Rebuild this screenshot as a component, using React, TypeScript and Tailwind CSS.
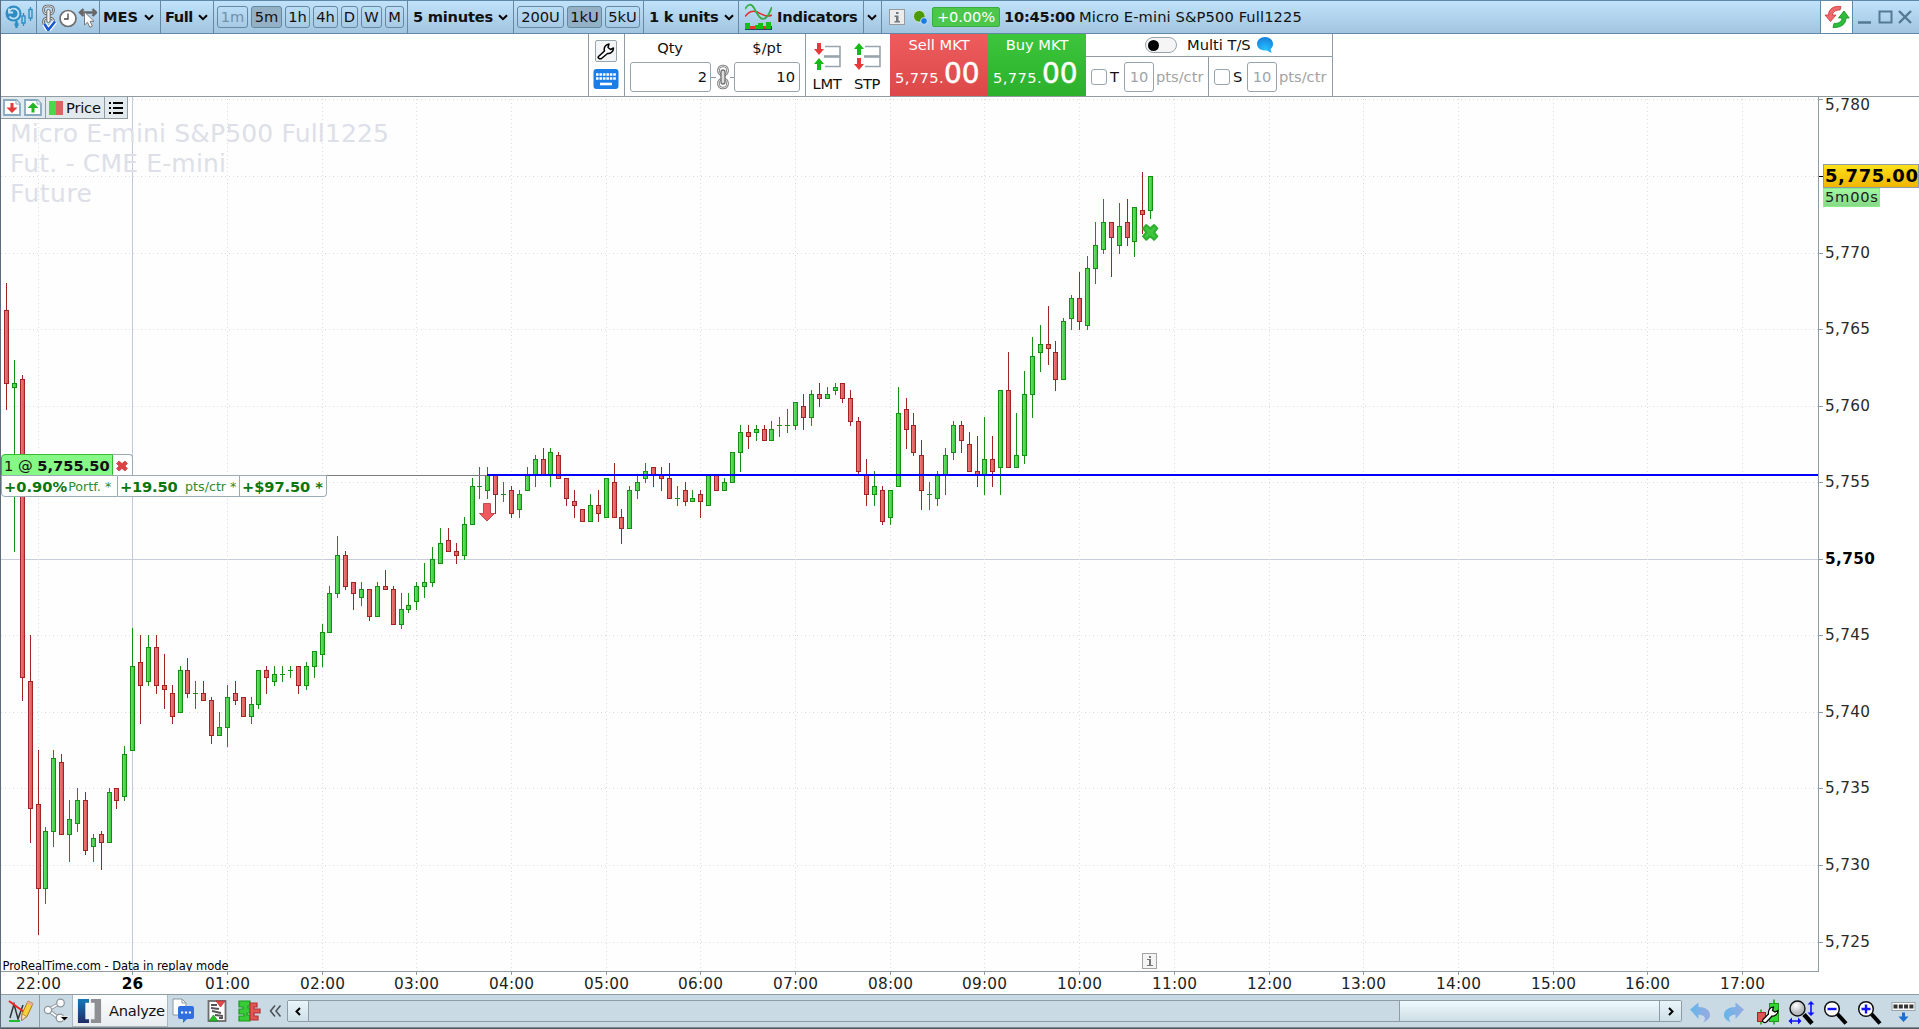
import React from "react";

type Dir = "g" | "r";
type Candle = [Dir, number, number, number, number];

/* direction, high, body top, body bottom, low (chart y units) */
const CANDLES: Candle[] = [
  ["r", 283, 310, 384, 410], ["g", 360, 383, 388, 552], ["r", 375, 379, 678, 701], ["r", 635, 681, 809, 843],
  ["r", 750, 804, 889, 935], ["g", 827, 831, 889, 904], ["g", 750, 758, 832, 847], ["r", 754, 762, 835, 835],
  ["g", 800, 819, 835, 862], ["g", 788, 800, 824, 832], ["r", 792, 800, 851, 855], ["g", 834, 838, 847, 862],
  ["r", 831, 834, 843, 870], ["g", 788, 792, 843, 843], ["r", 788, 788, 801, 809], ["g", 746, 754, 797, 801],
  ["g", 628, 666, 751, 751], ["r", 635, 662, 686, 724], ["g", 635, 647, 682, 686], ["r", 635, 647, 686, 694],
  ["r", 654, 685, 690, 709], ["r", 685, 693, 717, 724], ["g", 666, 670, 713, 713], ["r", 658, 670, 694, 698],
  ["g", 681, 693, 694, 709], ["r", 681, 693, 701, 701], ["r", 697, 700, 736, 744], ["g", 712, 727, 736, 736],
  ["g", 685, 697, 728, 747], ["r", 681, 693, 701, 705], ["r", 697, 697, 717, 717], ["g", 697, 704, 717, 724],
  ["g", 670, 670, 705, 709], ["r", 666, 670, 678, 694], ["g", 666, 674, 682, 686], ["g", 666, 674, 675, 682],
  ["g", 666, 670, 671, 678], ["r", 666, 666, 686, 694], ["g", 662, 666, 686, 690], ["g", 651, 651, 667, 678],
  ["g", 624, 632, 655, 667], ["g", 586, 593, 633, 633], ["g", 536, 555, 594, 598], ["r", 551, 555, 587, 590],
  ["r", 582, 582, 594, 610], ["g", 582, 589, 598, 606], ["r", 589, 589, 617, 621], ["g", 582, 586, 617, 617],
  ["r", 570, 586, 590, 590], ["r", 586, 589, 625, 625], ["g", 593, 609, 625, 629], ["g", 593, 605, 610, 613],
  ["g", 582, 586, 602, 610], ["g", 563, 582, 587, 598], ["g", 547, 559, 583, 587], ["g", 528, 543, 564, 564],
  ["r", 528, 540, 552, 552], ["r", 543, 551, 556, 564], ["g", 517, 524, 556, 560], ["g", 478, 486, 525, 525],
  ["g", 467, 486, 487, 499], ["g", 467, 475, 491, 499], ["r", 475, 475, 495, 514], ["g", 482, 494, 495, 502],
  ["r", 486, 490, 514, 518], ["g", 490, 494, 510, 518], ["g", 467, 475, 491, 491], ["g", 455, 459, 475, 487],
  ["r", 448, 459, 475, 475], ["g", 448, 452, 475, 487], ["r", 452, 455, 479, 479], ["r", 478, 478, 499, 506],
  ["r", 490, 501, 506, 518], ["r", 509, 509, 522, 522], ["g", 494, 505, 522, 522], ["r", 490, 505, 514, 522],
  ["g", 478, 478, 518, 518], ["r", 463, 482, 518, 518], ["r", 509, 517, 529, 544], ["g", 486, 490, 529, 529],
  ["g", 475, 482, 491, 499], ["g", 463, 471, 479, 483], ["r", 467, 467, 475, 487], ["r", 467, 474, 479, 491],
  ["r", 463, 478, 499, 499], ["g", 486, 498, 499, 506], ["r", 482, 490, 502, 506], ["g", 490, 498, 502, 502],
  ["r", 490, 494, 502, 518], ["g", 475, 475, 506, 506], ["r", 475, 475, 491, 491], ["g", 478, 482, 491, 491],
  ["g", 452, 452, 483, 483], ["g", 425, 432, 453, 472], ["r", 425, 432, 437, 449], ["g", 425, 429, 433, 441],
  ["r", 425, 429, 441, 441], ["g", 421, 429, 441, 441], ["g", 417, 425, 426, 437], ["g", 409, 425, 426, 433],
  ["g", 402, 402, 426, 430], ["r", 394, 406, 418, 430], ["g", 390, 394, 418, 426], ["r", 383, 394, 399, 407],
  ["g", 387, 394, 399, 399], ["g", 383, 387, 391, 395], ["r", 383, 383, 399, 403], ["r", 390, 398, 422, 426],
  ["r", 417, 421, 472, 475], ["r", 459, 475, 495, 506], ["g", 471, 486, 495, 506], ["r", 486, 490, 522, 525],
  ["g", 490, 490, 518, 525], ["g", 387, 413, 487, 487], ["r", 398, 409, 430, 449], ["r", 413, 425, 453, 456],
  ["r", 440, 455, 491, 510], ["g", 482, 494, 495, 510], ["g", 471, 475, 499, 506], ["g", 448, 455, 475, 495],
  ["g", 421, 425, 453, 460], ["r", 421, 425, 441, 453], ["r", 432, 444, 472, 472], ["r", 436, 471, 475, 487],
  ["g", 417, 459, 475, 495], ["r", 436, 459, 472, 487], ["g", 390, 390, 468, 495], ["r", 352, 390, 468, 468],
  ["g", 413, 455, 468, 468], ["g", 371, 394, 456, 464], ["g", 337, 356, 395, 418], ["g", 325, 344, 353, 372],
  ["r", 306, 344, 349, 365], ["r", 341, 352, 380, 391], ["g", 318, 321, 380, 380], ["g", 295, 298, 319, 330],
  ["r", 272, 298, 322, 330], ["g", 256, 268, 326, 330], ["g", 222, 245, 269, 284], ["g", 199, 222, 250, 254],
  ["r", 222, 222, 238, 277], ["g", 203, 226, 246, 254], ["r", 199, 222, 238, 246], ["g", 207, 207, 242, 257],
  ["r", 172, 210, 215, 234], ["g", 176, 176, 211, 219],
];

const barX = (i: number) => 6 + 8 * i - Math.floor((i + 5.1) / 9.2);

const TIMES = [
  "22:00", "26", "01:00", "02:00", "03:00", "04:00", "05:00", "06:00", "07:00", "08:00",
  "09:00", "10:00", "11:00", "12:00", "13:00", "14:00", "15:00", "16:00", "17:00",
].map((label, k) => ({ label, x: barX(4 + 12 * k), bold: label === "26" }));

const PRICES = [
  { label: "5,780", y: 99 }, { label: "", y: 176 }, { label: "5,770", y: 253 }, { label: "5,765", y: 329 },
  { label: "5,760", y: 406 }, { label: "5,755", y: 482 }, { label: "5,750", y: 559 }, { label: "5,745", y: 635 },
  { label: "5,740", y: 712 }, { label: "5,735", y: 788 }, { label: "5,730", y: 865 }, { label: "5,725", y: 942 },
];

function Chart() {
  return (
    <svg className="block" width="1918" height="897" viewBox="1 97 1918 897" shapeRendering="crispEdges">
      <defs>
        <linearGradient id="up" x1="0" x2="1"><stop offset="0" stopColor="#63e563" /><stop offset="1" stopColor="#41c441" /></linearGradient>
        <linearGradient id="down" x1="0" x2="1"><stop offset="0" stopColor="#f07878" /><stop offset="1" stopColor="#d65a5a" /></linearGradient>
        <linearGradient id="gold" x1="0" x2="0" y1="0" y2="1"><stop offset="0" stopColor="#ffe21c" /><stop offset="1" stopColor="#f0b400" /></linearGradient>
        <linearGradient id="mint" x1="0" x2="0" y1="0" y2="1"><stop offset="0" stopColor="#a2faa2" /><stop offset="1" stopColor="#86d886" /></linearGradient>
      </defs>
      <rect x="1" y="97" width="1918" height="897" fill="#fff" />
      <rect x="1" y="97" width="1817" height="874" fill="#fefefe" />
      {PRICES.map((p) =>
        p.y === 559 ? (
          <rect key={p.y} x="1" y="559" width="1817" height="1" fill="#c9ccdb" />
        ) : (
          <line key={p.y} x1="1" x2="1818" y1={p.y + 0.5} y2={p.y + 0.5} stroke="#dcdce6" strokeDasharray="1 3" />
        ),
      )}
      {TIMES.map((t) =>
        t.bold ? (
          <rect key={t.x} x={t.x} y="97" width="1" height="874" fill="#c3c8dc" />
        ) : (
          <line key={t.x} x1={t.x + 0.5} x2={t.x + 0.5} y1="99" y2="971" stroke="#dcdce6" strokeDasharray="1 3" />
        ),
      )}
      <g fill="#dde0e8" fontSize="25" shapeRendering="auto">
        <text x="10" y="142" textLength="379">Micro E-mini S&amp;P500 Full1225</text>
        <text x="10" y="172" textLength="216">Fut. - CME E-mini</text>
        <text x="10" y="202" textLength="82">Future</text>
      </g>
      {CANDLES.map(([d, hi, top, bot, lo], i) => {
        const x = barX(i);
        const edge = d === "g" ? "#159015" : "#a02424";
        return (
          <g key={i}>
            <rect x={x} y={hi} width="1" height={lo - hi} fill={edge} />
            <rect x={x - 2} y={top} width="5" height={bot - top} fill={edge} />
            {bot - top > 2 && (
              <rect x={x - 1} y={top + 1} width="3" height={bot - top - 2} fill={d === "g" ? "url(#up)" : "url(#down)"} />
            )}
          </g>
        );
      })}
      <rect x="133" y="475" width="354" height="1" fill="#7d7d7d" />
      <rect x="487" y="474" width="1331" height="2" fill="#0000fa" />
      <path d="M483.500 503.500h7v10h4l-7.500 7.500-7.500-7.500h4z" fill="#f05a5e" stroke="#c04a50" strokeWidth="1" shapeRendering="auto" />
      <path d="M1146.300 225l3.900 3.500 3.900-3.500 3.200 3.400-3.200 4 3.200 4-3.200 3.300-3.900-3.400-3.900 3.400-3.200-3.300 3.200-4-3.200-4z" fill="#3ec63e" stroke="#2fae2f" strokeWidth="2" strokeLinejoin="round" shapeRendering="auto" />
      <rect x="1142.500" y="953.500" width="14" height="15" fill="#f4f4f4" stroke="#a3a3a3" />
      <path d="M1149 956h2v2h-2zM1147 959h4v6h2v1h-6v-1h2v-5h-2z" fill="#777" />
      <text x="2.500" y="969.500" fontSize="11.500" fill="#000" textLength="226">ProRealTime.com - Data in replay mode</text>
      <rect x="1" y="971" width="1818" height="1" fill="#8f9ca4" />
      <rect x="1" y="972" width="1818" height="22" fill="#fff" />
      <rect x="1818" y="97" width="1" height="875" fill="#8f9ca4" />
      {TIMES.map((t) => (
        <g key={t.x}>
          <rect x={t.x} y="972" width="1" height="3" fill="#8f9ca4" />
          <text x={t.x + 0.5} y="989" fontSize="15.300" textAnchor="middle" fontWeight={t.bold ? 700 : 400} fill={t.bold ? "#000" : "#1e1e1e"} textLength={t.bold ? 21.5 : 45}>{t.label}</text>
        </g>
      ))}
      {PRICES.map((p) => (
        <g key={p.y}>
          <rect x="1819" y={p.y} width="4" height="1" fill={p.label ? "#8f9ca4" : "#000"} />
          {p.label && (
            <text x="1825" y={p.y === 99 ? 110 : p.y + 5} fontSize="15.300" fontWeight={p.y === 559 ? 700 : 400} fill={p.y === 559 ? "#000" : "#2a2a2a"} textLength={p.y === 559 ? 50 : 45}>{p.label}</text>
          )}
        </g>
      ))}
      <rect x="1823.500" y="164.500" width="95" height="23" fill="url(#gold)" stroke="#8f9ca4" />
      <text x="1825" y="182" fontSize="18" fontWeight="700" fill="#000" textLength="93">5,775.00</text>
      <rect x="1823.500" y="188" width="56" height="18.500" fill="url(#mint)" stroke="#86ee86" />
      <text x="1825" y="202" fontSize="14.670" fill="#222" textLength="53">5m00s</text>
    </svg>
  );
}

const Chevron = ({ className = "" }: { className?: string }) => (
  <svg className={className} width="10" height="7" viewBox="0 0 10 7" fill="none" stroke="#000" strokeWidth="2"><path d="M1 1.300l4 3.900 4-3.900" /></svg>
);

const Chip = ({ label, cls }: { label: string; cls: string }) => (
  <div className={"flex h-[22px] shrink-0 items-center justify-center rounded-[3px] border border-[#6489a1] text-[14.670px] " + cls}>{label}</div>
);

const ChainIcon = () => (
  <svg width="14" height="26" viewBox="0 0 14 26" fill="none" strokeWidth="2.600">
    <g stroke="#777"><rect x="2.500" y="2" width="9" height="9" rx="4" /><rect x="2.500" y="15" width="9" height="9" rx="4" /></g>
    <g stroke="#e0e0e0" strokeWidth="1"><rect x="2.500" y="2" width="9" height="9" rx="4" /><rect x="2.500" y="15" width="9" height="9" rx="4" /></g>
    <rect x="5" y="6" width="4" height="14" rx="2" fill="#ddd" stroke="#707070" strokeWidth="1.300" />
  </svg>
);

function TitleBar() {
  const sep = "flex h-full shrink-0 items-center border-r border-[#6489a1] ";
  return (
    <div className="flex h-[34px] shrink-0 border-y border-[#5f89a8] bg-gradient-to-b from-[#c0e2fb] to-[#a2c5df]">
      <div className={sep + "w-9 pl-1"}>
        <svg width="30" height="26" viewBox="0 0 30 26" fill="none">
          <circle cx="8.500" cy="9.500" r="8" fill="#2f8dc4" />
          <path d="M4 7.500a5 5 0 1 1 0.500 5M4 4.500v4h4" stroke="#c4e2f6" strokeWidth="1.800" />
          <path d="M11.500 17v7M9.500 20.500h4" stroke="#2f8dc4" strokeWidth="2.400" />
          <path d="M18.500 9v3m0 7v3M25.500 3v3m0 8v3" stroke="#2f8dc4" strokeWidth="1.300" />
          <rect x="17" y="12" width="3" height="7" stroke="#2f8dc4" strokeWidth="1.400" />
          <rect x="24" y="5.500" width="3" height="8.500" stroke="#2f8dc4" strokeWidth="1.400" />
        </svg>
      </div>
      <div className={sep + "w-[63px] pl-1"}>
        <svg width="56" height="28" viewBox="0 0 56 28" fill="none">
          <rect x="2.500" y="3" width="10" height="8" rx="3.500" stroke="#666" strokeWidth="2.600" />
          <rect x="2.500" y="3" width="10" height="8" rx="3.500" stroke="#e2e2e2" strokeWidth="1" />
          <rect x="2.500" y="15" width="10" height="8" rx="3.500" stroke="#666" strokeWidth="2.600" />
          <rect x="2.500" y="15" width="10" height="8" rx="3.500" stroke="#e2e2e2" strokeWidth="1" />
          <rect x="5.800" y="6.500" width="3.400" height="13" rx="1.700" fill="#eee" stroke="#666" />
          <path d="M3.500 21l3.800 6L14 18.500" stroke="#fff" strokeWidth="5" />
          <path d="M3.500 21l3.800 6L14 18.500" stroke="#1557d4" strokeWidth="2.600" />
          <circle cx="27" cy="15.500" r="8" fill="#fff" stroke="#6d6d6d" strokeWidth="1.700" />
          <path d="M27 10.500v5.500h-4" stroke="#444" strokeWidth="1.300" />
          <path d="M40 9.500h14M42.500 6l-3.500 3.500 3.500 3.500M51.500 6l3.500 3.500-3.500 3.500" stroke="#666" strokeWidth="2.400" />
          <path d="M43.500 9v13l3-2.700 2.400 5 2.500-1.200-2.400-4.800h4z" fill="#fff" stroke="#777" strokeWidth="1" />
        </svg>
      </div>
      <div className={sep + "w-[61px] gap-[6px] pl-[3px] text-[14.670px] font-bold"}>MES<Chevron /></div>
      <div className={sep + "w-[53px] gap-[5px] pl-1 text-[14.670px] font-bold tracking-[-0.5px]"}>Full<Chevron /></div>
      <div className={sep + "w-[194px] gap-[3px] pl-[3px]"}>
        <Chip label="1m" cls="w-[31px] text-[#6f91aa]" />
        <Chip label="5m" cls="w-[31px] bg-[#94b0c4]" />
        <Chip label="1h" cls="w-[25px]" />
        <Chip label="4h" cls="w-[25px]" />
        <Chip label="D" cls="w-[17px]" />
        <Chip label="W" cls="w-[21px]" />
        <Chip label="M" cls="w-[19px]" />
      </div>
      <div className={sep + "w-[106px] gap-[5px] pl-[5px] text-[14.670px] font-bold tracking-[-0.25px] whitespace-nowrap"}>5 minutes<Chevron /></div>
      <div className={sep + "w-[130px] gap-[3px] pl-[3px]"}>
        <Chip label="200U" cls="w-[47px]" />
        <Chip label="1kU" cls="w-[35px] bg-[#94b0c4]" />
        <Chip label="5kU" cls="w-[35px]" />
      </div>
      <div className={sep + "w-[95px] gap-[5px] pl-[5px] text-[14.670px] font-bold tracking-[-0.25px] whitespace-nowrap"}>1 k units<Chevron /></div>
      <div className={sep + "w-[125px] gap-1.5 pl-1.5 text-[14.670px] font-bold tracking-[-0.25px]"}>
        <svg className="shrink-0" width="27" height="28" viewBox="0 0 27 28" fill="none">
          <path d="M0 13.500C4 9 7 7 12 9s9 6 15 3" stroke="#d33" strokeWidth="1.600" />
          <path d="M0 6C3 1 6 0 9 5s5 11 9 11 6-5 9-12" stroke="#2fae3c" strokeWidth="1.700" />
          <path d="M0 23h27v4H0z" fill="#246" />
          <path d="M0 20h5v6H0zM10 22h4v4h-4zM13 20h5v6h-5zM21 19h5v7h-5z" fill="#12c012" />
          <path d="M5 23h5v3H5zM18 23h3v3h-3z" fill="#e33" />
        </svg>
        <span className="-ml-px">Indicators</span>
      </div>
      <div className={sep + "w-[18px] justify-center pr-px"}><Chevron /></div>
      <div className="flex min-w-0 flex-1 items-center pl-[7px]">
        <svg width="17" height="17" viewBox="0 0 17 17"><rect x=".5" y=".5" width="15" height="15" fill="#ececec" stroke="#999" /><path d="M7 3h2.500v2H7zM5.500 6.500h4V12H11v1.500H5.500V12H7V8H5.500z" fill="#6e7880" /></svg>
        <svg className="ml-[7px]" width="15" height="15" viewBox="0 0 15 15"><circle cx="6.300" cy="6.300" r="5.800" fill="#4a9a05" stroke="#dff0d0" strokeWidth=".8" /><circle cx="11" cy="11" r="3.400" fill="#1a7be8" stroke="#e4f0fa" strokeWidth=".8" /></svg>
        <div className="ml-[4px] flex h-5 w-[68px] items-center justify-center rounded-[2px] border border-[#3aae3a] bg-[#4cc74c] text-[14.670px] tracking-[-0.1px] text-white">+0.00%</div>
        <div className="ml-[4px] w-[75px] text-[14.670px] font-bold tracking-[-0.25px]">10:45:00</div>
        <div className="text-[14.670px] tracking-[0.12px]">Micro E-mini S&amp;P500 Full1225</div>
      </div>
      <div className="flex w-[33px] shrink-0 items-center justify-center border-x border-[#5f89a8] bg-white">
        <svg width="26" height="24" viewBox="0 0 26 24">
          <path d="M17 1.500C10 .5 4.500 4 4.500 10H1L6.500 16.500 12 10H8.500c0-3 3-5 7.500-5z" fill="#f26a6e" stroke="#c33" strokeWidth=".8" />
          <path d="M9 22.500c8 .500 13-3.500 13-9.500h3.200L20 6 14.500 13H18c0 3.500-3 5.500-8 5.500z" fill="#2ebc3a" stroke="#0d8d1c" strokeWidth=".8" />
        </svg>
      </div>
      <svg className="w-[66px] shrink-0" height="32" viewBox="0 0 66 32" fill="none" stroke="#547a93" strokeWidth="2">
        <path d="M5 21.500h13M46 10l12 12M58 10l-12 12" strokeWidth="2.400" />
        <rect x="26.500" y="10.500" width="12" height="11" />
      </svg>
    </div>
  );
}

const Arrow = ({ up, color }: { up?: boolean; color: string }) => (
  <svg className={up ? "rotate-180" : ""} width="10" height="12" viewBox="0 0 10 12"><path d="M3 0h4v6h3l-5 6-5-6h3z" fill={color} /></svg>
);

function OrderType({ label, upFirst }: { label: string; upFirst?: boolean }) {
  return (
    <div className="flex w-10 flex-col items-center pt-[9px]">
      <div className="flex">
        <div className="flex flex-col gap-[3px]">
          <Arrow up={upFirst} color={upFirst ? "#18b818" : "#e53a3a"} />
          <Arrow up={!upFirst} color={upFirst ? "#e53a3a" : "#18b818"} />
        </div>
        <svg width="17" height="27" viewBox="0 0 17 27" fill="none" stroke="#96a5ad" strokeWidth="1.600"><path d="M1 3.500h15v20H1" /><path d="M0 13.500h16" strokeWidth="2.600" /></svg>
      </div>
      <div className="mt-[5px] text-[14.670px] leading-[18px] tracking-[-0.3px]">{label}</div>
    </div>
  );
}

function MarketButton({ label, cls }: { label: string; cls: string }) {
  return (
    <div className={"flex h-[62px] w-[98px] flex-col text-white " + cls}>
      <div className="pt-[2px] text-center text-[14.670px] leading-[18px]">{label}</div>
      <div className="flex items-baseline pl-[5px] pt-px leading-[38px]">
        <span className="w-[49px] text-[14.670px] tracking-[0.4px]">5,775.</span>
        <span className="text-[28px] [-webkit-text-stroke:0.5px_white]">00</span>
      </div>
    </div>
  );
}

function StopField({ label }: { label: string }) {
  return (
    <div className="flex flex-1 items-center pl-[5px] text-[14.670px]">
      <div className="h-4 w-4 rounded-[3px] border border-[#96a5ad] bg-white" />
      <div className="w-[17px] pl-[3px]">{label}</div>
      <div className="flex h-[30px] w-[30px] items-center justify-center rounded-[3px] border border-[#96a5ad] text-[#a0a4ae]">10</div>
      <div className="pl-[2px] text-[#a3a3a3]">pts/ctr</div>
    </div>
  );
}

function OrderPanel() {
  const b = "border-[#8f9ca4]";
  return (
    <div className={"flex h-[63px] shrink-0 border-b bg-white pl-[587px] " + b}>
      <div className={"flex w-[37px] flex-col items-center gap-[7px] border-x pr-px pt-[6px] " + b}>
        <div className="flex h-[22px] w-[22px] items-center justify-center rounded-[2px] border border-[#96a5ad] bg-[#f4f5f6]">
          <svg width="18" height="18" viewBox="0 0 18 18" fill="#fff" stroke="#000" strokeWidth="1.500" strokeLinejoin="round"><path d="M1.500 14.500l6-5.500C6.500 5.500 8.500 2.500 12 2L11 5.500l2.500 2 3-1.500c0 3.500-3 6-6 5.500l-6 5c-2 1-4-.500-3-2z" /></svg>
        </div>
        <svg width="26" height="20" viewBox="0 0 26 20"><rect x=".5" y="0" width="25" height="20" rx="3" fill="#1b7de8" /><path d="M3 5.500h20M3 9.500h20" stroke="#fff" strokeWidth="2.600" strokeDasharray="2.600 .850" /><path d="M7 15h12" stroke="#fff" strokeWidth="2.600" /></svg>
      </div>
      <div className={"flex w-[181px] items-start border-r pl-[5px] " + b}>
        <div className="w-[81px] pt-[5px] text-[14.670px] leading-[18px]">
          <div className="pr-px text-center tracking-[-0.2px]">Qty</div>
          <div className="mt-[5px] flex h-[30px] items-center justify-end rounded-[3px] border border-[#96a5ad] pr-[3px]">2</div>
        </div>
        <div className="mt-[29px] flex h-[28px] w-[23px] items-center">
          <span className="h-px flex-1 bg-[#8f9ca4]" /><ChainIcon /><span className="h-px flex-1 bg-[#8f9ca4]" />
        </div>
        <div className="w-[66px] pt-[5px] text-[14.670px] leading-[18px]">
          <div className="text-center">$/pt</div>
          <div className="mt-[5px] flex h-[30px] items-center justify-end rounded-[3px] border border-[#96a5ad] pr-[4px]">10</div>
        </div>
      </div>
      <div className="flex w-[84px] pl-px"><OrderType label="LMT" /><OrderType label="STP" upFirst /></div>
      <MarketButton label="Sell MKT" cls="bg-gradient-to-b from-[#ee5c5e] to-[#dc4848]" />
      <MarketButton label="Buy MKT" cls="bg-gradient-to-b from-[#3cc63c] to-[#2bb02b]" />
      <div className={"flex w-[247px] flex-col border-r " + b}>
        <div className={"flex h-[23px] items-center border-b pl-[59px] text-[14.670px] " + b}>
          <div className="flex h-4 w-8 items-center rounded-full border border-[#96a5ad] bg-[#f5f5f5] pl-[2px]"><div className="h-[11px] w-[11px] rounded-full bg-black" /></div>
          <div className="pl-[10px]">Multi T/S</div>
          <svg className="ml-[6px]" width="17" height="16" viewBox="0 0 17 16"><defs><radialGradient id="bub" cx=".5" cy=".8" r=".9"><stop offset="0" stopColor="#27c4ff" /><stop offset="1" stopColor="#1478d8" /></radialGradient></defs><path d="M8 0c4.500 0 8 3 8 7 0 2.500-1 4-2.500 5l1 4-4.500-2.500C4 14 0 11 0 7s3.500-7 8-7z" fill="url(#bub)" /></svg>
        </div>
        <div className="flex flex-1">
          <div className={"flex w-[123px] border-r " + b}><StopField label="T" /></div>
          <div className="flex flex-1"><StopField label="S" /></div>
        </div>
      </div>
    </div>
  );
}

const FileArrow = ({ up }: { up?: boolean }) => (
  <svg width="18" height="17" viewBox="0 0 18 17"><path d="M1 1h12.500L17 4.500V16H1z" fill="#fff" stroke="#88a9bf" strokeWidth="1.800" /><path d="M13 1v4h4" fill="#fff" stroke="#88a9bf" />{up ? <path d="M9 3.500L3.500 9h4v4.500h3V9h4z" fill="#23b523" /> : <path d="M7.500 4h3v4.500h4L9 14 3.500 8.500h4z" fill="#e33a3a" />}</svg>
);

function ChartArea() {
  const box = "flex items-center border-[#9babb6] bg-white ";
  return (
    <div className="relative h-[897px] shrink-0">
      <Chart />
      <div className="absolute left-0 top-0 flex h-[22px] w-[127px] border-b border-r border-[#8f9ca4] bg-[#e2eaee]">
        <div className="flex w-[45px] items-center gap-[3px] border-r border-[#8f9ca4] pl-[2px]"><FileArrow /><FileArrow up /></div>
        <div className="flex w-[59px] items-center border-r border-[#8f9ca4] pl-[3px] text-[14.670px] tracking-[-0.2px]">
          <span className="h-[14px] w-[7px] bg-[#4fd44f]" /><span className="mr-[3px] h-[14px] w-[7px] bg-[#dd6262]" />Price
        </div>
        <div className="flex flex-1 items-center justify-center"><svg width="14" height="12" viewBox="0 0 14 12" stroke="#000" strokeWidth="2"><path d="M0 1h2M4 1h10M0 6h2M4 6h10M0 11h2M4 11h10" /></svg></div>
      </div>
      <div className="absolute left-0 top-[357px] flex h-[22px] w-[132px]">
        <div className="flex w-[112px] items-center rounded-tl-[4px] border border-[#36b936] bg-[#86f886] pl-[2px] pt-[2px] text-[14.670px] whitespace-nowrap">1&nbsp;@&nbsp;<b>5,755.50</b></div>
        <div className={box + "flex-1 justify-center rounded-tr-[4px] border-r border-t pr-px"}><svg width="12" height="12" viewBox="0 0 12 12"><path d="M3 1l3 2.500L9 1l2.500 2.500L9 6l2.500 2.500L9 11 6 8.500 3 11 .5 8.500 3 6 .5 3.500z" fill="#dc4444" stroke="#b93030" strokeWidth=".6" /></svg></div>
      </div>
      <div className="absolute left-0 top-[378px] flex h-[22px] w-[326px] whitespace-nowrap text-[14.670px] text-[#0b760b]">
        <div className={box + "w-[117px] rounded-bl-[4px] border pl-[2px] pt-[2px]"}><b>+0.90%</b><span className="ml-px text-[12.700px] text-[#2f8a2f]">Portf. *</span></div>
        <div className={box + "w-[122px] border-y border-r pl-[2px] pt-[2px]"}><b className="w-[65px] tracking-[-0.2px]">+19.50</b><span className="text-[12.700px] text-[#2f8a2f]">pts/ctr *</span></div>
        <div className={box + "flex-1 rounded-br-[4px] border-y border-r pl-[2px] pt-[2px]"}><b className="tracking-[-0.1px]">+$97.50 *</b></div>
      </div>
    </div>
  );
}

function BottomBar() {
  const ends = "flex h-full w-[21px] items-center justify-center bg-gradient-to-b from-[#e9f6fa] to-[#cfe0e8]";
  return (
    <div className="flex h-[33px] shrink-0 border-t border-[#8f9ca4] bg-[#c9dae5]">
      <div className="flex w-[39px] items-center justify-center border-r border-[#8f9ca4]">
        <svg width="27" height="26" viewBox="0 0 27 26" fill="none">
          <path d="M3 20L7 6l4 15 5-14" stroke="#333" strokeWidth="1.500" /><path d="M2 3l15 11" stroke="#e22" strokeWidth="2" /><path d="M2 23h11" stroke="#2b3" strokeWidth="2" />
          <path d="M15 16L21 3l5 2.500-6 13-5.500 4z" fill="#f6cf3c" stroke="#a8761c" /><path d="M21 3l5 2.500-1 2.200-5-2.400z" fill="#e7a9a0" /><path d="M15 16l4.500 2.500-5 4z" fill="#f7e8c8" stroke="#a8761c" strokeWidth=".7" />
        </svg>
      </div>
      <div className="flex w-8 items-center justify-center">
        <svg width="27" height="26" viewBox="0 0 27 26" fill="none"><path d="M5 12L17 5M5 12l12 9" stroke="#8d969c" strokeWidth="3.600" /><path d="M5 12L17 5M5 12l12 9" stroke="#fff" strokeWidth="1.800" /><g fill="#fff" stroke="#8d969c" strokeWidth="1.300"><circle cx="5" cy="12" r="3.600" /><circle cx="17.500" cy="5" r="3.800" /><circle cx="17" cy="20" r="3.800" /></g><path d="M17 18.500h9L21.500 23z" fill="#000" stroke="#fff" strokeWidth=".8" /></svg>
      </div>
      <div className="flex w-[96px] items-center border-x border-b border-[#a9b8c1] bg-gradient-to-b from-[#fdfefe] to-[#e9edf0] pl-[4px] text-[14.670px]">
        <svg className="shrink-0" width="25" height="26" viewBox="0 0 27 27" preserveAspectRatio="none"><defs><linearGradient id="brk" x1="0" x2="0" y1="0" y2="1"><stop offset="0" stopColor="#157ab8" /><stop offset="1" stopColor="#202a68" /></linearGradient></defs><path d="M1 1h12v4H9v17h4v4H1z" fill="url(#brk)" /><path d="M26 1H15v4h4v17h-4v4h11z" fill="#8d8f92" /></svg>
        <span className="pl-[7px] tracking-[-0.3px]">Analyze</span>
      </div>
      <div className="flex w-[119px] items-center pl-[4px]">
        <svg width="23" height="26" viewBox="0 0 23 26"><path d="M1 1h9l4 4v12H1z" fill="#fff" stroke="#8b979e" /><path d="M10 1v4h4" fill="none" stroke="#8b979e" /><path d="M8 8h12a2 2 0 0 1 2 2v9a2 2 0 0 1-2 2h-5l-4 4v-4H8a2 2 0 0 1-2-2v-9a2 2 0 0 1 2-2z" fill="#2f6fe0" /><path d="M9 14.500h2.200M12.900 14.500h2.200M16.800 14.500H19" stroke="#fff" strokeWidth="2.200" /></svg>
        <svg className="ml-[12px]" width="20" height="22" viewBox="0 0 20 22"><rect x="1.500" y="1" width="17" height="20" fill="#fff" stroke="#6c6c6c" strokeWidth="1.800" /><path d="M4 5h6M4 8l8 1M5 11l9 2M8 15l8 1M12 18h4" stroke="#555" strokeWidth="1.800" /><path d="M9 1h9l-4.500 6z" fill="#e14b4b" stroke="#b22" strokeWidth=".7" /><path d="M2 21h9l-4.500-6z" fill="#28c128" stroke="#181" strokeWidth=".7" /></svg>
        <svg className="ml-[11px]" width="23" height="23" viewBox="0 0 23 23"><path d="M1 1h11v5h-2v2h2v5H9v2h3v6H1v-5h5v-2H1V9h4V7H1z" fill="#37cc37" stroke="#1a9a1a" strokeWidth="1.200" /><path d="M12 3h7v4h-3v2h6v4h-6v3h4v4h-8z" fill="#e05656" stroke="#b53333" strokeWidth="1.200" /></svg>
        <svg className="ml-[8px]" width="13" height="12" viewBox="0 0 13 12" fill="none" stroke="#4a4f53" strokeWidth="1.500"><path d="M6 .5L1.500 6 6 11.500M11.500 .5L7 6l4.500 5.500" /></svg>
      </div>
      <div className="mt-[5px] flex h-[22px] w-[1395px] rounded-[2px] border border-[#8f9ca4]">
        <div className={ends + " border-r border-[#8f9ca4]"}><svg width="6" height="9" viewBox="0 0 6 9" fill="none" stroke="#000" strokeWidth="2"><path d="M5 1L1.500 4.500 5 8" /></svg></div>
        <div className="w-[1090px]" />
        <div className="flex-1 border-x border-[#8f9ca4] bg-gradient-to-b from-[#eefafd] to-[#cddfe6]" />
        <div className={ends}><svg width="6" height="9" viewBox="0 0 6 9" fill="none" stroke="#000" strokeWidth="2"><path d="M1 1l3.500 3.500L1 8" /></svg></div>
      </div>
      <svg className="shrink-0" width="237" height="32" viewBox="1682 995.5 237 32" fill="none">
        <defs>
          <linearGradient id="undo" x1="0" x2="1"><stop offset="0" stopColor="#62b6ea" /><stop offset="1" stopColor="#9aaae0" /></linearGradient>
          <radialGradient id="lens" cx=".4" cy=".3"><stop offset="0" stopColor="#fff" /><stop offset="1" stopColor="#b9bcbe" /></radialGradient>
        </defs>
        <path d="M1690 1010l8.500-7v4.500c7 0 11.500 3 11.500 8 0 3-2 5.500-7 7.500 3-3 3-7.500-4.500-8v4.500z" fill="url(#undo)" />
        <path d="M1744 1010l-8.500-7v4.500c-7 0-11.500 3-11.500 8 0 3 2 5.500 7 7.500-3-3-3-7.500 4.500-8v4.500z" fill="url(#undo)" />
        <path d="M1774 1000v25M1761 1010v15" stroke="#1b9a1b" strokeWidth="1.500" />
        <rect x="1769.500" y="1004" width="9" height="18" fill="#35d535" stroke="#1b9a1b" />
        <rect x="1757.500" y="1013" width="8" height="9" fill="#d55" stroke="#a22" />
        <path d="M1763 1020l5.500-5.500c-.500-3.500 1.500-7 5-7l-1 3.500 2.500 1.500 3-1.500c0 3.500-3 6-6 5.500l-5.500 6c-2.500 1.500-5-.500-3.500-2.500z" fill="#fff" stroke="#000" strokeWidth="1.200" />
        <path d="M1804 1015l8 9" stroke="#000" strokeWidth="4.500" /><circle cx="1797.500" cy="1009" r="7.500" fill="url(#lens)" stroke="#111" strokeWidth="1.400" />
        <path d="M1811 1004v10M1790 1021.500h10" stroke="#11f" strokeWidth="1.600" />
        <path d="M1807.500 1005l3.500-3.500 3.500 3.500zM1807.500 1013l3.500 3.500 3.500-3.500zM1792 1018l-3.500 3.500 3.500 3.500zM1798 1018l3.500 3.500-3.500 3.500z" fill="#11f" />
        <path d="M1837 1014l9 10" stroke="#000" strokeWidth="4" /><circle cx="1832" cy="1009.500" r="7.300" fill="#fff" stroke="#111" strokeWidth="1.500" /><path d="M1827.500 1009.500h9" stroke="#11f" strokeWidth="2.400" />
        <path d="M1871 1014l9 10" stroke="#000" strokeWidth="4" /><circle cx="1866" cy="1009.500" r="7.300" fill="#fff" stroke="#111" strokeWidth="1.500" /><path d="M1861.500 1009.500h9M1866 1005v9" stroke="#11f" strokeWidth="2.400" />
        <rect x="1892" y="1003" width="23" height="8" fill="#fff" stroke="#9aa3a8" /><path d="M1893.500 1007h20" stroke="#333" strokeWidth="4" strokeDasharray="4 1.300" />
        <path d="M1902 1013h3v4h3.500l-5 5.500-5-5.500h3.500z" fill="#1a6fd0" />
      </svg>
    </div>
  );
}

export default function App() {
  return (
    <div className="flex h-[1029px] w-[1919px] flex-col overflow-hidden border-l border-[#5d6b7a] bg-white font-['DejaVu_Sans',sans-serif] text-[#111]">
      <TitleBar />
      <OrderPanel />
      <ChartArea />
      <BottomBar />
      <div className="h-[2px] shrink-0 border-t border-[#7e8a92] bg-[#50585f]" />
    </div>
  );
}
